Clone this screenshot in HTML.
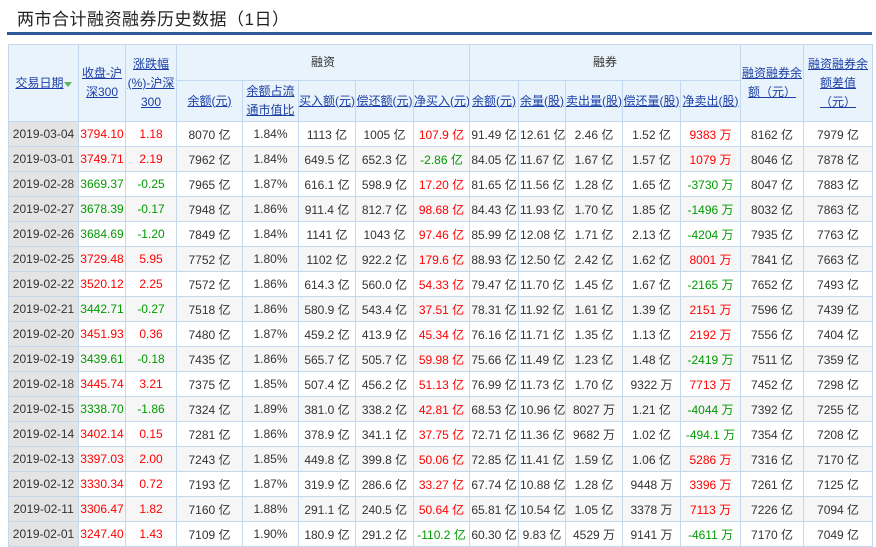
<!DOCTYPE html>
<html><head><meta charset="utf-8"><style>
*{margin:0;padding:0;box-sizing:border-box}
body{width:876px;height:546px;overflow:hidden;background:#fff;font-family:"Liberation Sans","Noto Sans CJK SC",sans-serif;color:#333;position:relative}
.t{position:absolute;left:17px;top:5px;font-size:17px;color:#222;letter-spacing:0.5px}
.line{position:absolute;left:7px;top:32px;width:865px;height:3px;background:#2d5a97}
table{position:absolute;left:8px;top:44px;border-collapse:collapse;table-layout:fixed;width:864px;font-size:12px}
td,th{border:1px solid #c3d8ec;text-align:center;white-space:nowrap;overflow:hidden;font-weight:normal}
th{background:#e9f3fc;color:#333;line-height:19px}
th a{color:#1c3fa6;text-decoration:underline}
tr.h1 th{height:36px}
tr.h2 th{height:41px}
td{height:25px;padding:0 1px}
td:first-child{background:#e4e4e4}
tr.g td{background:#f6f6f6}
tr.g td:first-child{background:#e4e4e4}
.r{color:#f00}.n{color:#090}
.ar{display:inline-block;width:0;height:0;border-left:4px solid transparent;border-right:4px solid transparent;border-top:5px solid #5cb85c;vertical-align:middle;position:relative;top:1px}
</style></head><body>
<div class="t">两市合计融资融券历史数据（1日）</div>
<div class="line"></div>
<table>
<colgroup><col style="width:70px"><col style="width:47px"><col style="width:51px"><col style="width:66px"><col style="width:56px"><col style="width:57px"><col style="width:58px"><col style="width:56px"><col style="width:49px"><col style="width:47px"><col style="width:57px"><col style="width:58px"><col style="width:60px"><col style="width:63px"><col style="width:69px"></colgroup>
<tr class="h1"><th rowspan="2"><a>交易日期</a><span class="ar"></span></th><th rowspan="2"><a>收盘-沪</a><br><a>深300</a></th><th rowspan="2"><a>涨跌幅</a><br><a>(%)-沪深</a><br><a>300</a></th><th colspan="5">融资</th><th colspan="5">融券</th><th rowspan="2"><a>融资融券余</a><br><a>额（元）</a></th><th rowspan="2"><a>融资融券余</a><br><a>额差值</a><br><a>（元）</a></th></tr>
<tr class="h2"><th><a>余额(元)</a></th><th><a>余额占流</a><br><a>通市值比</a></th><th><a>买入额(元)</a></th><th><a>偿还额(元)</a></th><th><a>净买入(元)</a></th><th><a>余额(元)</a></th><th><a>余量(股)</a></th><th><a>卖出量(股)</a></th><th><a>偿还量(股)</a></th><th><a>净卖出(股)</a></th></tr>
<tr><td>2019-03-04</td><td class="r">3794.10</td><td class="r">1.18</td><td>8070 亿</td><td>1.84%</td><td>1113 亿</td><td>1005 亿</td><td class="r">107.9 亿</td><td>91.49 亿</td><td>12.61 亿</td><td>2.46 亿</td><td>1.52 亿</td><td class="r">9383 万</td><td>8162 亿</td><td>7979 亿</td></tr>
<tr class="g"><td>2019-03-01</td><td class="r">3749.71</td><td class="r">2.19</td><td>7962 亿</td><td>1.84%</td><td>649.5 亿</td><td>652.3 亿</td><td class="n">-2.86 亿</td><td>84.05 亿</td><td>11.67 亿</td><td>1.67 亿</td><td>1.57 亿</td><td class="r">1079 万</td><td>8046 亿</td><td>7878 亿</td></tr>
<tr><td>2019-02-28</td><td class="n">3669.37</td><td class="n">-0.25</td><td>7965 亿</td><td>1.87%</td><td>616.1 亿</td><td>598.9 亿</td><td class="r">17.20 亿</td><td>81.65 亿</td><td>11.56 亿</td><td>1.28 亿</td><td>1.65 亿</td><td class="n">-3730 万</td><td>8047 亿</td><td>7883 亿</td></tr>
<tr class="g"><td>2019-02-27</td><td class="n">3678.39</td><td class="n">-0.17</td><td>7948 亿</td><td>1.86%</td><td>911.4 亿</td><td>812.7 亿</td><td class="r">98.68 亿</td><td>84.43 亿</td><td>11.93 亿</td><td>1.70 亿</td><td>1.85 亿</td><td class="n">-1496 万</td><td>8032 亿</td><td>7863 亿</td></tr>
<tr><td>2019-02-26</td><td class="n">3684.69</td><td class="n">-1.20</td><td>7849 亿</td><td>1.84%</td><td>1141 亿</td><td>1043 亿</td><td class="r">97.46 亿</td><td>85.99 亿</td><td>12.08 亿</td><td>1.71 亿</td><td>2.13 亿</td><td class="n">-4204 万</td><td>7935 亿</td><td>7763 亿</td></tr>
<tr class="g"><td>2019-02-25</td><td class="r">3729.48</td><td class="r">5.95</td><td>7752 亿</td><td>1.80%</td><td>1102 亿</td><td>922.2 亿</td><td class="r">179.6 亿</td><td>88.93 亿</td><td>12.50 亿</td><td>2.42 亿</td><td>1.62 亿</td><td class="r">8001 万</td><td>7841 亿</td><td>7663 亿</td></tr>
<tr><td>2019-02-22</td><td class="r">3520.12</td><td class="r">2.25</td><td>7572 亿</td><td>1.86%</td><td>614.3 亿</td><td>560.0 亿</td><td class="r">54.33 亿</td><td>79.47 亿</td><td>11.70 亿</td><td>1.45 亿</td><td>1.67 亿</td><td class="n">-2165 万</td><td>7652 亿</td><td>7493 亿</td></tr>
<tr class="g"><td>2019-02-21</td><td class="n">3442.71</td><td class="n">-0.27</td><td>7518 亿</td><td>1.86%</td><td>580.9 亿</td><td>543.4 亿</td><td class="r">37.51 亿</td><td>78.31 亿</td><td>11.92 亿</td><td>1.61 亿</td><td>1.39 亿</td><td class="r">2151 万</td><td>7596 亿</td><td>7439 亿</td></tr>
<tr><td>2019-02-20</td><td class="r">3451.93</td><td class="r">0.36</td><td>7480 亿</td><td>1.87%</td><td>459.2 亿</td><td>413.9 亿</td><td class="r">45.34 亿</td><td>76.16 亿</td><td>11.71 亿</td><td>1.35 亿</td><td>1.13 亿</td><td class="r">2192 万</td><td>7556 亿</td><td>7404 亿</td></tr>
<tr class="g"><td>2019-02-19</td><td class="n">3439.61</td><td class="n">-0.18</td><td>7435 亿</td><td>1.86%</td><td>565.7 亿</td><td>505.7 亿</td><td class="r">59.98 亿</td><td>75.66 亿</td><td>11.49 亿</td><td>1.23 亿</td><td>1.48 亿</td><td class="n">-2419 万</td><td>7511 亿</td><td>7359 亿</td></tr>
<tr><td>2019-02-18</td><td class="r">3445.74</td><td class="r">3.21</td><td>7375 亿</td><td>1.85%</td><td>507.4 亿</td><td>456.2 亿</td><td class="r">51.13 亿</td><td>76.99 亿</td><td>11.73 亿</td><td>1.70 亿</td><td>9322 万</td><td class="r">7713 万</td><td>7452 亿</td><td>7298 亿</td></tr>
<tr class="g"><td>2019-02-15</td><td class="n">3338.70</td><td class="n">-1.86</td><td>7324 亿</td><td>1.89%</td><td>381.0 亿</td><td>338.2 亿</td><td class="r">42.81 亿</td><td>68.53 亿</td><td>10.96 亿</td><td>8027 万</td><td>1.21 亿</td><td class="n">-4044 万</td><td>7392 亿</td><td>7255 亿</td></tr>
<tr><td>2019-02-14</td><td class="r">3402.14</td><td class="r">0.15</td><td>7281 亿</td><td>1.86%</td><td>378.9 亿</td><td>341.1 亿</td><td class="r">37.75 亿</td><td>72.71 亿</td><td>11.36 亿</td><td>9682 万</td><td>1.02 亿</td><td class="n">-494.1 万</td><td>7354 亿</td><td>7208 亿</td></tr>
<tr class="g"><td>2019-02-13</td><td class="r">3397.03</td><td class="r">2.00</td><td>7243 亿</td><td>1.85%</td><td>449.8 亿</td><td>399.8 亿</td><td class="r">50.06 亿</td><td>72.85 亿</td><td>11.41 亿</td><td>1.59 亿</td><td>1.06 亿</td><td class="r">5286 万</td><td>7316 亿</td><td>7170 亿</td></tr>
<tr><td>2019-02-12</td><td class="r">3330.34</td><td class="r">0.72</td><td>7193 亿</td><td>1.87%</td><td>319.9 亿</td><td>286.6 亿</td><td class="r">33.27 亿</td><td>67.74 亿</td><td>10.88 亿</td><td>1.28 亿</td><td>9448 万</td><td class="r">3396 万</td><td>7261 亿</td><td>7125 亿</td></tr>
<tr class="g"><td>2019-02-11</td><td class="r">3306.47</td><td class="r">1.82</td><td>7160 亿</td><td>1.88%</td><td>291.1 亿</td><td>240.5 亿</td><td class="r">50.64 亿</td><td>65.81 亿</td><td>10.54 亿</td><td>1.05 亿</td><td>3378 万</td><td class="r">7113 万</td><td>7226 亿</td><td>7094 亿</td></tr>
<tr><td>2019-02-01</td><td class="r">3247.40</td><td class="r">1.43</td><td>7109 亿</td><td>1.90%</td><td>180.9 亿</td><td>291.2 亿</td><td class="n">-110.2 亿</td><td>60.30 亿</td><td>9.83 亿</td><td>4529 万</td><td>9141 万</td><td class="n">-4611 万</td><td>7170 亿</td><td>7049 亿</td></tr>
</table>
</body></html>
